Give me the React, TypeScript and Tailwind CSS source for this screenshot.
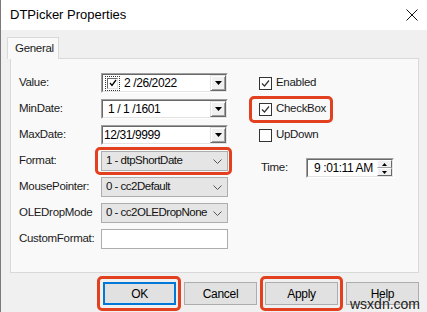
import React from "react";

function Check({ checked, label }: { checked: boolean; label: string }) {
  return (
    <div className="flex h-[20px] items-center">
      <div className="flex h-[13px] w-[13px] items-center justify-center border border-[#333] bg-white">
        {checked && (
          <svg width="11" height="11" viewBox="0 0 11 11">
            <path d="M2 5.5 L4.5 8 L9 2.5" fill="none" stroke="#333" strokeWidth="1.2" />
          </svg>
        )}
      </div>
      <span className="ml-[4px]">{label}</span>
    </div>
  );
}

function DropBtn() {
  return (
    <div className="flex h-[16px] w-[16px] items-center justify-center border border-t-[#e3e3e3] border-l-[#e3e3e3] border-r-[#696969] border-b-[#696969] bg-[#f0f0f0] shadow-[inset_1px_1px_0_#fff,inset_-1px_-1px_0_#a0a0a0]">
      <svg width="7" height="4" viewBox="0 0 7 4">
        <path d="M0 0 H7 L3.5 4 Z" fill="#000" />
      </svg>
    </div>
  );
}

function DateBox({ children }: { children: React.ReactNode }) {
  return (
    <div className="h-[20px] w-[127px] border border-t-[#a0a0a0] border-l-[#a0a0a0] border-r-white border-b-white">
      <div className="flex h-full items-center border border-t-[#696969] border-l-[#696969] border-r-[#e3e3e3] border-b-[#e3e3e3] bg-white">
        <div className="flex flex-1 items-center whitespace-nowrap text-[12px] tracking-[-0.4px] text-black">{children}</div>
        <DropBtn />
      </div>
    </div>
  );
}

function Combo({ value }: { value: string }) {
  return (
    <div className="flex h-[20px] w-[127px] items-center border border-[#adadad] bg-[#e5e5e5] pl-[4px] pr-[5px]">
      <span className="flex-1 overflow-hidden whitespace-nowrap text-[11.5px] tracking-[-0.5px] text-[#111]">{value}</span>
      <svg width="9" height="5" viewBox="0 0 9 5" className="ml-[2px] shrink-0">
        <path d="M0.5 0.5 L4.5 4.5 L8.5 0.5" fill="none" stroke="#555" strokeWidth="1" />
      </svg>
    </div>
  );
}

function Button({ label, focused }: { label: string; focused?: boolean }) {
  return (
    <div
      className={
        "flex h-[23px] w-[73px] items-center justify-center bg-[#e1e1e1] text-[12px] text-black " +
        (focused ? "border-2 border-[#0078d7]" : "border border-[#adadad]")
      }
    >
      {label}
    </div>
  );
}

export default function App() {
  return (
    <div className="relative h-[312px] w-[427px] overflow-hidden border-l border-[#7a7a7a] bg-[#f0f0f0] font-['Liberation_Sans',Arial,sans-serif] text-[11.5px] tracking-[-0.3px] text-[#1a1a1a]">
      {/* Title bar */}
      <div className="flex h-[30px] items-center justify-between bg-white pl-[9px] pr-[9px]">
        <span className="text-[13px] tracking-normal text-black">DTPicker Properties</span>
        <svg width="12" height="12" viewBox="0 0 12 12">
          <path d="M0.5 0.5 L11.5 11.5 M11.5 0.5 L0.5 11.5" stroke="#111" strokeWidth="1" />
        </svg>
      </div>

      <div className="pl-[6px] pt-[7px]">
        {/* Tab */}
        <div className="relative z-10 flex h-[22px] w-[52px] items-center border border-b-0 border-[#d9d9d9] bg-[#f9f9f9] pl-[7px]">
          General
        </div>

        {/* Panel */}
        <div className="-mt-px ml-[3px] flex h-[215px] w-[409px] border border-[#d9d9d9] bg-[#f9f9f9] pl-[8px] pt-[14px]">
          <div className="grid grid-cols-[82px_127px] gap-y-[6px] auto-rows-[20px] items-center whitespace-nowrap">
            <span>Value:</span>
            <DateBox>
              <div className="ml-[2px] flex h-[15px] w-[15px] items-center justify-center border border-dotted border-[#333]">
                <div className="flex h-[11px] w-[11px] items-center justify-center border border-t-[#696969] border-l-[#696969] border-r-[#e3e3e3] border-b-[#e3e3e3] bg-white">
                  <svg width="8" height="8" viewBox="0 0 8 8">
                    <path d="M1 4 L3 6.5 L7 1" fill="none" stroke="#000" strokeWidth="1.3" />
                  </svg>
                </div>
              </div>
              <span className="ml-[4px]">2 /26/2022</span>
            </DateBox>

            <span>MinDate:</span>
            <DateBox>
              <span className="ml-[5px]">1 / 1 /1601</span>
            </DateBox>

            <span>MaxDate:</span>
            <DateBox>
              <span className="ml-[1px]">12/31/9999</span>
            </DateBox>

            <span>Format:</span>
            <div className="relative">
              <Combo value="1 - dtpShortDate" />
              <div className="absolute -bottom-[4px] -left-[6px] -right-[4px] -top-[4px] rounded-[5px] border-[3px] border-[#e2401f]" />
            </div>

            <span>MousePointer:</span>
            <Combo value="0 - cc2Default" />

            <span>OLEDropMode</span>
            <Combo value="0 - cc2OLEDropNone" />

            <span>CustomFormat:</span>
            <div className="h-[20px] w-[127px] border border-[#adadad] bg-white" />
          </div>

          <div className="ml-[31px] flex flex-col">
            <Check checked label="Enabled" />
            <div className="relative mt-[6px] w-fit">
              <Check checked label="CheckBox" />
              <div className="absolute -bottom-[4px] -left-[10px] -right-[7px] -top-[3px] rounded-[5px] border-[3px] border-[#e2401f]" />
            </div>
            <div className="mt-[6px]">
              <Check checked={false} label="UpDown" />
            </div>

            <div className="mt-[13px] flex items-center pl-[2px]">
              <span className="w-[45px]">Time:</span>
              <div className="h-[20px] w-[88px] border border-t-[#a0a0a0] border-l-[#a0a0a0] border-r-white border-b-white">
                <div className="flex h-full items-center border border-t-[#696969] border-l-[#696969] border-r-[#e3e3e3] border-b-[#e3e3e3] bg-white">
                  <span className="ml-[6px] flex-1 whitespace-nowrap text-[12px] tracking-[-0.4px] text-black">9 :01:11 AM</span>
                  <div className="flex h-full w-[15px] flex-col">
                    <div className="flex flex-1 items-center justify-center border border-t-white border-l-white border-r-[#696969] border-b-[#a0a0a0] bg-[#f0f0f0]">
                      <svg width="5" height="3" viewBox="0 0 5 3">
                        <path d="M0 3 H5 L2.5 0 Z" fill="#000" />
                      </svg>
                    </div>
                    <div className="flex flex-1 items-center justify-center border border-t-white border-l-white border-r-[#696969] border-b-[#696969] bg-[#f0f0f0]">
                      <svg width="5" height="3" viewBox="0 0 5 3">
                        <path d="M0 0 H5 L2.5 3 Z" fill="#000" />
                      </svg>
                    </div>
                  </div>
                </div>
              </div>
            </div>
          </div>
        </div>
      </div>

      {/* Buttons */}
      <div className="mt-[9px] flex gap-[8px] pl-[102px]">
        <div className="relative">
          <Button label="OK" focused />
          <div className="absolute -bottom-[6px] -left-[6px] -right-[5px] -top-[6px] rounded-[5px] border-[3px] border-[#e2401f]" />
        </div>
        <Button label="Cancel" />
        <div className="relative">
          <Button label="Apply" />
          <div className="absolute -bottom-[6px] -left-[5px] -right-[5px] -top-[6px] rounded-[5px] border-[3px] border-[#e2401f]" />
        </div>
        <Button label="Help" />
      </div>

      {/* Watermark */}
      <span className="absolute left-[349px] top-[294px] text-[14px] tracking-normal text-[#222]">wsxdn.com</span>
    </div>
  );
}
